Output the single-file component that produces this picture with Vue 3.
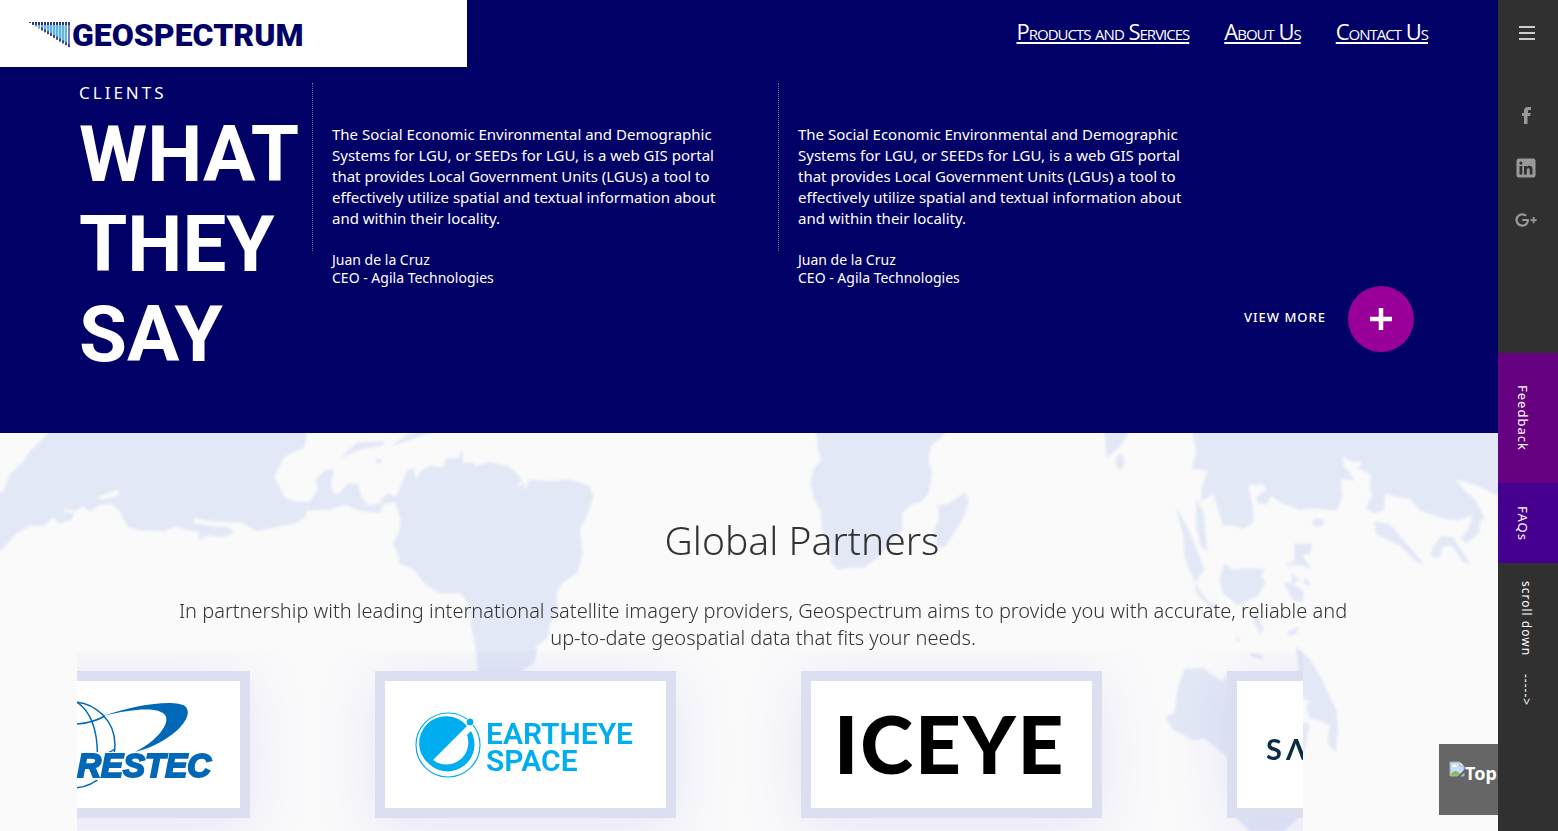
<script setup>
const navLinks = ['Products and Services', 'About Us', 'Contact Us']
const quote =
  'The Social Economic Environmental and Demographic Systems for LGU, or SEEDs for LGU, is a web GIS portal that provides Local Government Units (LGUs) a tool to effectively utilize spatial and textual information about and within their locality.'
const testimonials = [
  { id: 1, name: 'Juan de la Cruz', role: 'CEO - Agila Technologies' },
  { id: 2, name: 'Juan de la Cruz', role: 'CEO - Agila Technologies' }
]
// Bars of the logo's spectrum wedge: each one is longer than the one before.
const bars = Array.from({ length: 14 }, (_, i) => ({ x: i * 3, h: 1 + i * 1.85 }))
</script>

<template>
  <div class="page">
    <main class="main">
      <section class="hero">
        <header class="header">
          <a class="brand" href="#" aria-label="Geospectrum">
            <svg class="wedge" viewBox="0 0 41 26" aria-hidden="true">
              <path d="M12 3H38V22Z" fill="#b4e2f6" />
              <g v-for="(b, i) in bars" :key="i">
                <rect :x="b.x" y="0" width="2" :height="b.h" :fill="i === 13 ? '#7c7cb4' : '#62b4e0'" />
                <rect :x="b.x" y="0" width="2" :height="Math.min(3, b.h)" fill="#33337f" />
                <rect v-if="i > 3" :x="b.x" :y="b.h - 3" width="2" height="3" fill="#44448f" />
              </g>
            </svg>
            <span class="brand-name">GEOSPECTRUM</span>
          </a>
          <nav class="nav">
            <a v-for="l in navLinks" :key="l" href="#">{{ l }}</a>
          </nav>
        </header>

        <div class="clients">
          <div class="clients-head">
            <p class="eyebrow">CLIENTS</p>
            <h1>WHAT THEY SAY</h1>
          </div>
          <article v-for="t in testimonials" :key="t.id" class="testimonial">
            <blockquote>{{ quote }}</blockquote>
            <p class="author">{{ t.name }}<br />{{ t.role }}</p>
          </article>
        </div>

        <a class="more" href="#">
          <span>VIEW MORE</span>
          <svg viewBox="0 0 66 66" aria-hidden="true">
            <circle cx="33" cy="33" r="33" fill="#990099" />
            <path d="M22 33H44M33 22V44" stroke="#fff" stroke-width="4.5" />
          </svg>
        </a>
      </section>

      <section class="partners">
        <svg class="map" viewBox="0 0 1498 425" preserveAspectRatio="xMidYMin slice" aria-hidden="true">
          <g class="land" fill="#e3e8f6" stroke="#e3e8f6" stroke-width="3" stroke-linejoin="round">
            <g transform="matrix(.3954 0 0 .3333 0 -3)">
              <path d="M125 -20L125 9 80 60 60 95 25 135 10 185-20 195V372L0 362 40 310 75 285 110 285 135 260 150 280 180 268 185 250 160 245 162 235 190 240 210 228 228 242 250 225 285 220 305 245 325 290 355 300 415 303 440 288 480 300 505 305 505 328 525 315 560 320 590 308 575 292 535 290 490 280 488 262 520 270 560 275 610 275 650 302 700 290 745 278 770 262 775 240 830 238 875 222 905 240 960 248 970 220 1000 215 1015 270 1010 310 995 340 1010 375 1010 400 1045 415 1075 460 1110 488 1165 488 1185 520 1195 600 1205 660 1212 740 1315 740 1320 718 1350 700 1357 655 1336 612 1345 632 1360 645 1385 620 1390 580 1410 540 1405 490 1420 460 1460 425 1472 370 1465 300 1485 250 1499 200 1490 170 1470 160 1440 150 1390 155 1340 150 1328 188 1325 160 1298 180 1318 150 1305 130 1285 110 1240 97 1205 110 1190 98 1170 100 1167 62 1160 85 1130 85 1120 115 1090 108 1065 125 1053 155 1045 115 1030 125 1010 180 1000 205 985 192 965 205 965 220 930 228 912 200 905 165 880 162 860 190 845 195 835 165 842 120 825 120 800 150 805 180 785 215 750 217 720 205 705 170 692 140 705 110 715 85 740 65 770 50 775 -20Z" />
              <path d="M865 80L905 38 970 35 968 45 915 55ZM995 45L1030 15 1055 9 1085 -10 1090 5 1050 22Z" />
              <circle cx="958" cy="93" r="6" />
              <path d="M247 203L300 180 298 195 262 207Z" fill="#fafafb" stroke="#fafafb" />
            </g>
            <g transform="matrix(.3333 0 0 .3333 600 -3)">
              <path d="M648 -20L655 60 665 92 640 120 633 165 645 210 665 245 668 300 690 350 695 400 715 418 750 410 790 412 830 385 870 340 905 300 905 250 930 225 965 212 985 190 995 130 985 95 990 50 1035 9 1045 -20Z" />
              <path d="M1095 188L1105 215 1090 260 1060 310 1035 350 1015 350 1003 300 1018 270 1015 228 1045 222 1070 205Z" />
            </g>
            <g transform="matrix(.3333 0 0 .3333 1080 -3)">
              <path d="M75 -20H146L140 15 118 50 80 82Z" />
              <ellipse cx="120" cy="95" rx="12" ry="22" />
              <path d="M335 -20L350 70 335 115 385 120 365 180 365 212 400 190 410 220 430 285 460 285 490 295 520 275 515 220 503 165 550 162 560 180 530 200 535 220 560 220 570 195 610 220 660 238 700 233 770 240 785 200 780 145 820 150 808 125 790 112 785 78 820 95 850 95 835 115 875 130 870 170 880 195 858 235 880 248 910 240 915 188 950 200 990 205 1020 240 1080 262 1130 270 1180 255 1165 300 1145 325 1160 338 1195 310 1200 270 1213 265 1185 210 1150 180 1125 145 1190 165 1275 205V-20Z" />
              <path d="M290 238L325 300 345 350 372 420 345 455 315 380 312 320ZM350 210L370 250 380 360 365 350 350 290ZM345 460L370 498 410 535 395 535 350 490ZM435 400L455 420 510 415 555 420 540 435 555 455 535 495 475 525 430 490 420 450Z" />
              <path d="M645 342H695L690 370 665 375 690 415 665 405 615 403 645 395ZM635 430L655 450 640 460ZM675 445L692 465 672 462ZM612 458L640 462 670 485 665 515 640 510ZM885 275L930 285 960 320 1030 400 1010 395 960 345 890 312ZM1085 318L1120 325 1168 400 1150 395 1115 345 1085 350 1080 380 1055 380 1060 350ZM525 540L550 600 540 612 525 580ZM510 670L545 675 550 688 515 680ZM625 605L655 592 645 612 625 618Z" />
              <ellipse cx="715" cy="277" rx="17" ry="11" />
              <circle cx="473" cy="628" r="5" />
              <path d="M315 718L370 715 425 755 450 725V985L375 925 340 930 275 895 258 860 285 850 295 770ZM465 1160L510 1205H610L655 1160Z" />
              <path d="M650 650L690 690 720 740 750 805 768 840 773 900 765 965 745 940 750 885 720 870 690 865 680 830 690 815 665 800ZM660 880H688L670 970Z" />
            </g>
          </g>
        </svg>

        <div class="intro">
          <h2>Global Partners</h2>
          <p>In partnership with leading international satellite imagery providers, Geospectrum aims to provide you with accurate, reliable and <span class="keep">up-to-date</span> geospatial data that fits your needs.</p>
        </div>

        <div class="carousel">
          <a class="card" href="#" aria-label="RESTEC">
            <svg viewBox="0 0 281 127">
              <g fill="none" stroke="#0068b7" stroke-width="1.5">
                <ellipse cx="113" cy="64" rx="43" ry="43" />
                <path d="M118 21C134 32 142 55 137 97M80 38C108 46 130 44 146 35M95 80C125 79 145 76 156 68M118 21C100 42 95 90 118 107" />
              </g>
              <path d="M90 71H170V99H90Z" fill="#fff" />
              <path fill="#0068b7" d="M144 35C175 24 215 18 226 25C238 36 210 63 176 71C198 60 212 42 206 34C200 26 176 27 144 35Z" />
              <text class="restec" x="252" y="96" text-anchor="end">RESTEC</text>
            </svg>
          </a>
          <a class="card" href="#" aria-label="Eartheye Space">
            <svg viewBox="0 0 281 127">
              <circle cx="63" cy="64" r="32" fill="none" stroke="#00aeef" stroke-width="1.2" />
              <path fill="#00aeef" d="M82 45A27 27 0 1 0 44 83L48 79ZM44 83A27 27 0 0 0 86 50L82 54A22 22 0 0 1 48 79Z" />
              <circle cx="85" cy="41" r="4" fill="#00aeef" stroke="#fff" />
              <text class="eartheye" x="101" y="63">EARTHEYE</text>
              <text class="eartheye" x="101" y="90">SPACE</text>
            </svg>
          </a>
          <a class="card" href="#" aria-label="ICEYE">
            <svg viewBox="0 0 281 127"><text class="iceye" x="23" y="93">ICEYE</text></svg>
          </a>
          <a class="card" href="#" aria-label="Satellite imagery partner">
            <svg viewBox="0 0 281 127"><text class="sat" x="29" y="79">SΛ</text></svg>
          </a>
        </div>
      </section>

      <a class="top" href="#">
        <svg viewBox="0 0 16 16" aria-hidden="true">
          <path d="M1 1H11L15 5V15H1Z" fill="#c9dbf8" stroke="#a9a9a9" />
          <path d="M1.500 14.500C4 9 8 8 12 14.500Z" fill="#7cc05c" />
          <path d="M3 6C3 4 5 3 6 4C8 4 8 6 8 6Z" fill="#fff" />
          <path d="M11 1V5H15Z" fill="#fff" stroke="#a9a9a9" />
          <path d="M16 8L8 16H11L16 11Z" fill="#666" />
        </svg>Top
      </a>
    </main>

    <aside class="rail">
      <button class="menu" type="button" aria-label="Menu"><i></i><i></i><i></i></button>
      <div class="social">
        <a href="#" aria-label="Facebook">
          <svg viewBox="0 0 24 24"><path d="M14 9V7.200C14 6.300 14.300 5.900 15.300 5.900H17V3H14.300C11.300 3 10 4.500 10 7V9H8V12H10V20H13.500V12H16.200L16.700 9Z" /></svg>
        </a>
        <a href="#" aria-label="LinkedIn">
          <svg viewBox="0 0 24 24"><path fill-rule="evenodd" d="M5 2.500H19A2.500 2.500 0 0 1 21.500 5V19A2.500 2.500 0 0 1 19 21.500H5A2.500 2.500 0 0 1 2.500 19V5A2.500 2.500 0 0 1 5 2.500ZM5.500 10V18.500H8.300V10ZM6.900 5.500A1.600 1.600 0 1 0 6.900 8.700A1.600 1.600 0 1 0 6.900 5.500ZM10 10V18.500H12.800V14C12.800 11.600 15.700 11.500 15.700 14V18.500H18.500V13.200C18.500 9.300 14.400 9 12.800 11.300V10Z" /></svg>
        </a>
        <a href="#" aria-label="Google Plus">
          <svg viewBox="0 0 24 24"><path d="M8.300 10.900V13H12.700C12.300 15.200 10.700 16.600 8.300 16.600A4.600 4.600 0 1 1 11.300 8.500L12.800 7A6.800 6.800 0 1 0 8.300 18.800C12.500 18.800 15.200 15.900 15 10.900ZM18.700 9V11.200H16.500V13H18.700V15.200H20.500V13H22.700V11.200H20.500V9Z" /></svg>
        </a>
      </div>
      <a class="tab feedback" href="#">Feedback</a>
      <a class="tab faqs" href="#">FAQs</a>
      <p class="scroll"><span>scroll down</span><span>-----&gt;</span></p>
    </aside>
  </div>
</template>

<style>
body {
  margin: 0;
  background: #fafafb;
}
</style>

<style scoped>
.page {
  display: grid;
  grid-template-columns: minmax(0, 1fr) 60px;
  height: 100vh;
  overflow: hidden;
  font-family: "Noto Sans", "Open Sans", sans-serif;
}
.main {
  position: relative;
  display: flex;
  flex-direction: column;
  overflow: hidden;
}
p, h1, h2, blockquote { margin: 0; }
a { color: inherit; text-decoration: none; }
svg { display: block; }

.hero {
  background: #000066;
  color: #fff;
  padding-bottom: 53px;
  position: relative;
}
.header {
  display: flex;
  justify-content: space-between;
}
.brand {
  box-sizing: border-box;
  display: flex;
  align-items: center;
  gap: 2px;
  width: 467px;
  height: 67px;
  padding: 2px 29px 0;
  background: #fff;
}
.wedge { width: 41px; height: 26px; }
.brand-name {
  font: 900 32px/34px Roboto, sans-serif;
  color: #000066;
}
.nav {
  display: flex;
  gap: 35px;
  padding: 18px 70px 0 0;
  font: 22px/27px "Open Sans", sans-serif;
  font-variant: small-caps;
  letter-spacing: -1px;
}
.nav a {
  text-decoration: underline;
}
.clients {
  display: grid;
  grid-template-columns: 233px 466px 466px;
  padding: 16px 0 0 79px;
}
.eyebrow {
  font-size: 17px;
  line-height: 20px;
  letter-spacing: 3px;
}
h1 {
  font: 700 78px/90px Roboto, sans-serif;
  padding-top: 7px;
  width: min-content;
}
.testimonial {
  position: relative;
  padding: 41px 50px 0 20px;
}
.testimonial::before {
  content: "";
  position: absolute;
  left: 0;
  top: 0;
  height: 168px;
  border-left: 1px dotted #777766;
}
blockquote {
  font-size: 15px;
  line-height: 21px;
}
.author {
  padding-top: 22px;
  font-size: 14px;
  line-height: 18px;
}
.more {
  position: absolute;
  right: 84px;
  bottom: 81px;
  display: flex;
  align-items: center;
  gap: 22px;
  font-size: 13px;
  font-weight: 500;
  letter-spacing: 1px;
}
.more span { padding-bottom: 4px; }
.more svg { width: 66px; height: 66px; }

.partners {
  position: relative;
  flex: 1;
  background: #fafafb;
  color: #333;
}
.map {
  position: absolute;
  inset: 0;
  width: 100%;
  height: 100%;
}
.land { filter: blur(1px); }
.intro {
  position: relative;
  padding: 82px 142px 0 170px;
  text-align: center;
}
h2 {
  padding-left: 78px;
  font: 300 39px/50px "Noto Sans", sans-serif;
}
.intro p {
  padding-top: 32px;
  font: 300 20px/27px "Noto Sans", sans-serif;
}
.keep { white-space: nowrap; }
.carousel {
  position: relative;
  display: flex;
  gap: 125px;
  margin: 0 195px 0 77px;
  padding: 20px 0 40px;
  overflow: hidden;
}
.card {
  flex: none;
  width: 281px;
  border: 10px solid #dcdff0;
  background: #fff;
  box-shadow: 0 10px 60px rgba(110, 100, 220, .14);
}
.card:first-child { margin-left: -128px; }
.restec { font: italic bold 33px "Liberation Sans", sans-serif; fill: #0068b7; stroke: #0068b7; stroke-width: 2px; }
.eartheye { font: 600 30px Roboto, sans-serif; fill: #00aeef; }
.iceye { font: 900 80px Lato, sans-serif; letter-spacing: 2px; fill: #000; }
.sat { font: 700 29px Lato, sans-serif; letter-spacing: 4px; fill: #0b2c45; }

.top {
  position: absolute;
  left: calc(100% - 59px);
  bottom: 16px;
  display: flex;
  box-sizing: border-box;
  width: 99px;
  height: 71px;
  padding: 17px 10px;
  background: #666;
  color: #fff;
  font-weight: bold;
  font-size: 18px;
  line-height: 24px;
}
.top svg { width: 16px; height: 16px; }

.rail {
  background: #303030;
  color: #fff;
}
.menu {
  display: grid;
  gap: 4px;
  width: 58px;
  height: 66px;
  padding: 0 21px;
  align-content: center;
  border: 0;
  background: none;
}
.menu i { height: 2px; background: #ccc; }
.social {
  display: grid;
  justify-items: center;
  gap: 28px;
  padding: 38px 4px 121px 0;
}
.social svg { width: 24px; height: 24px; fill: #999; }
.tab {
  box-sizing: border-box;
  display: flex;
  align-items: center;
  justify-content: center;
  width: 60px;
  padding-right: 10px;
  writing-mode: vertical-rl;
  font-size: 13px;
  letter-spacing: 1px;
}
.feedback { height: 130px; background: #650080; }
.faqs { height: 80px; background: #460090; }
.scroll {
  display: flex;
  gap: 18px;
  width: 57px;
  padding-top: 18px;
  writing-mode: vertical-rl;
  font-size: 12px;
  line-height: 57px;
  letter-spacing: 1px;
}
</style>
